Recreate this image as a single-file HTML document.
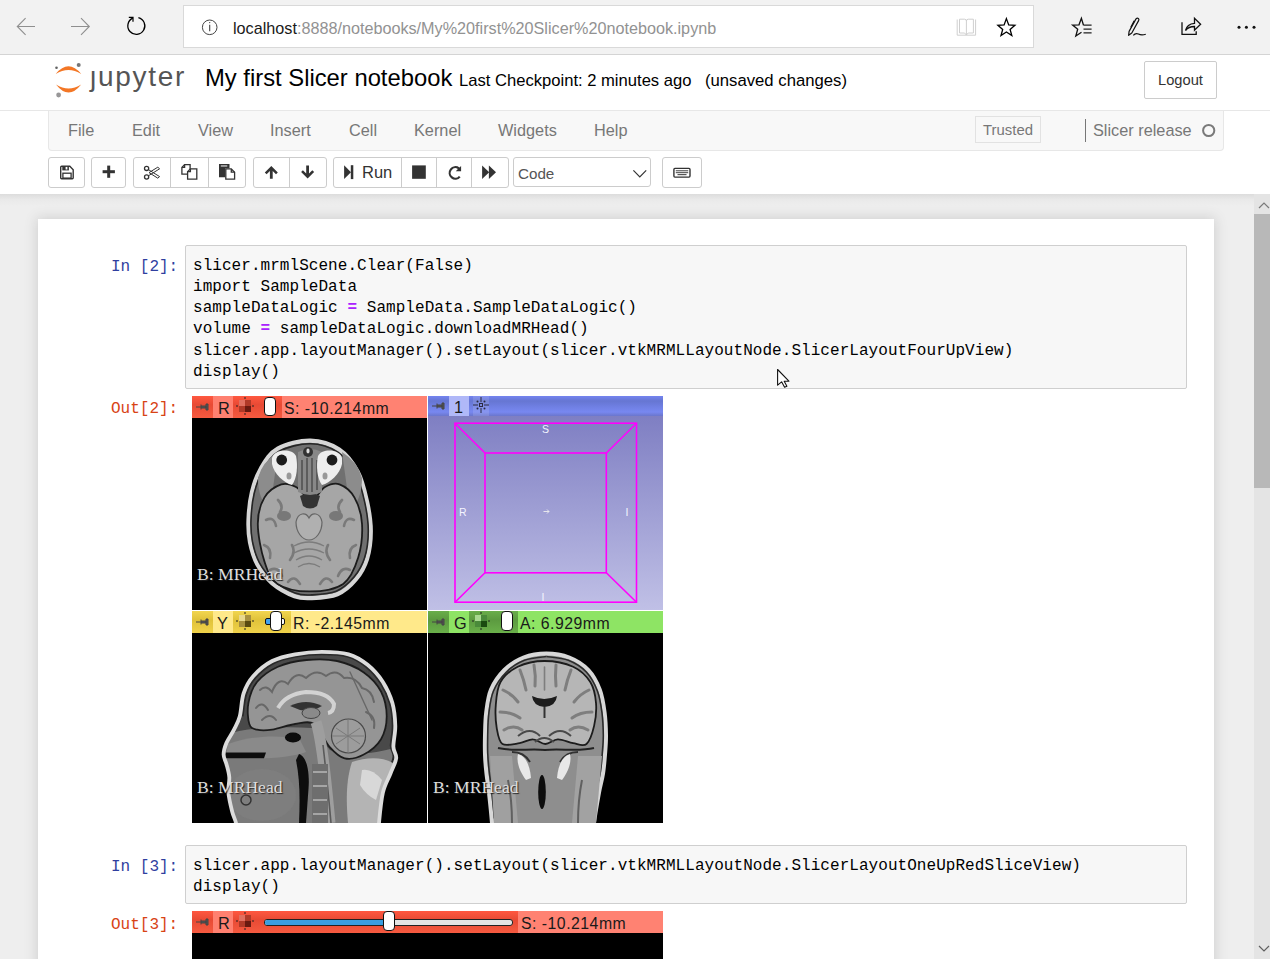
<!DOCTYPE html>
<html><head><meta charset="utf-8">
<style>
*{box-sizing:border-box;margin:0;padding:0}
html,body{width:1270px;height:959px;overflow:hidden;background:#eeeeee;font-family:"Liberation Sans",sans-serif;position:relative}
.abs{position:absolute}
#chrome{position:absolute;left:0;top:0;width:1270px;height:55px;background:#f2f2f2;border-bottom:1px solid #d4d4d4}
#addr{position:absolute;left:183px;top:5px;width:851px;height:43px;background:#fff;border:1px solid #d9d9d9}
#url{position:absolute;left:233px;top:19px;font-size:16.2px;color:#1a1a1a;white-space:nowrap;letter-spacing:0}
#url span{color:#929292}
#hdr{position:absolute;left:0;top:55px;width:1270px;height:139px;background:#fff}
#hdrline{position:absolute;left:0;top:110px;width:1270px;height:1px;background:#e7e7e7}
#title{position:absolute;left:205px;top:64px;font-size:23.8px;color:#000;white-space:nowrap}
#ckpt{position:absolute;left:459px;top:71px;font-size:16.6px;color:#000;white-space:nowrap}
#autosave{position:absolute;left:705px;top:71px;font-size:16.7px;color:#000;white-space:nowrap}
#logout{position:absolute;left:1144px;top:61px;width:73px;height:38px;border:1px solid #ccc;border-radius:2px;background:#fff;font-size:14.7px;color:#333;text-align:center;line-height:36px}
#menubar{position:absolute;left:48px;top:111px;width:1176px;height:40px;background:#f8f8f8;border:1px solid #e7e7e7;border-top:none;border-radius:0 0 4px 4px}
.mi{position:absolute;top:11px;font-size:16.3px;color:#777;white-space:nowrap}
#trusted{position:absolute;left:975px;top:116px;width:66px;height:27px;border:1px solid #e2e2e2;background:#f8f8f8;font-size:14.9px;color:#777;text-align:center;line-height:26.5px}
#kname{position:absolute;left:1093px;top:121px;font-size:16.3px;color:#777;white-space:nowrap}
.btn{position:absolute;top:157px;height:31px;border:1px solid #cccccc;background:#fff;border-radius:3px}
#nbshadow{position:absolute;left:0;top:194px;width:1254px;height:12px;background:linear-gradient(#dcdcdc,#e9e9e9 45%,#eeeeee)}
#container{position:absolute;left:38px;top:219px;width:1176px;height:760px;background:#fff;box-shadow:0 0 12px 1px rgba(87,87,87,.2)}
#sb{position:absolute;left:1254px;top:194px;width:16px;height:765px;background:#e4e4e4}
#thumb{position:absolute;left:1254px;top:214px;width:16px;height:274px;background:#b8b8b8}
.prompt{position:absolute;font-family:"Liberation Mono",monospace;font-size:16px;line-height:21.16px;white-space:pre}
.pin{color:#303f9f}
.pout{color:#d84315}
.inbox{position:absolute;background:#f7f7f7;border:1px solid #cfcfcf;border-radius:2px}
.code{position:absolute;font-family:"Liberation Mono",monospace;font-size:16px;line-height:21.16px;color:#000;white-space:pre;letter-spacing:0.05px}
.op{color:#aa22ff;font-weight:bold}

.bar{position:absolute;height:22px;overflow:hidden}
.seg{position:absolute;top:0;height:100%}
.blab{position:absolute;font-size:15.8px;letter-spacing:0.5px;color:#1a1a1a;white-space:nowrap;line-height:22px;margin-top:2px}
.blet{position:absolute;font-size:16.3px;color:#1a1a1a;line-height:22px;margin-top:0.5px}
.mrlab{position:absolute;font-family:"Liberation Serif",serif;font-size:17.6px;color:#dedede;white-space:nowrap;text-shadow:1px 1px 1px #222}
.view{position:absolute;background:#000;overflow:hidden}
</style></head>
<body>
<div id="chrome"></div>
<div id="addr"></div>

<svg class="abs" style="left:0;top:0" width="1270" height="54" viewBox="0 0 1270 54">
 <g fill="none" stroke="#8f8f8f" stroke-width="1.1">
  <path d="M35 26.5H16.8M25.6 18.2L17.3 26.5L25.6 34.8"/>
  <path d="M71 26.5H89.3M81 18.2L89.3 26.5L81 34.8"/>
 </g>
 <g fill="none" stroke="#000" stroke-width="1.3">
  <path d="M138.4 17.6A8.5 8.5 0 1 1 132.8 18.1"/>
 </g>
 <path d="M128.8 16.8H133.6V21.7L132.4 21.7L132.4 18H128.8Z" fill="#000"/>
 <circle cx="209.7" cy="27.3" r="7.3" fill="none" stroke="#444" stroke-width="1"/>
 <path d="M209.7 24.8V31.2" stroke="#444" stroke-width="1.1"/>
 <circle cx="209.7" cy="22.6" r="0.7" fill="#444"/>
 <g fill="none" stroke="#cfcfcf" stroke-width="1">
  <path d="M957.2 19.5V35.2H975.6V19.5"/>
  <path d="M959.5 19.2H964.5Q966.4 19.2 966.4 21V35"/>
  <path d="M973.4 19.2H968.3Q966.4 19.2 966.4 21"/>
  <path d="M959.5 19.2V33H964.6L966.4 35L968.2 33H973.4V19.2"/>
 </g>
 <path d="M1006.4 18.6L1008.7 24.9L1014.9 25.3L1010.1 29.4L1011.8 35.6L1006.4 32.0L1001.0 35.6L1002.7 29.4L997.9 25.3L1004.1 24.9Z" fill="none" stroke="#000" stroke-width="1.3" stroke-linejoin="miter"/>
 <path d="M1083.5 25.2L1081.4 18.2L1079 24.8L1072.6 25.1L1077.7 29.2L1075.8 36L1081.5 32.3" fill="none" stroke="#111" stroke-width="1.3"/>
 <path d="M1083.5 25.2H1091.6M1083.5 29.1H1091.6M1083.5 32.9H1091.6" stroke="#222" stroke-width="1.3"/>
 <g fill="none" stroke="#111" stroke-width="1.2" stroke-linejoin="round">
  <path d="M1128.6 35.3L1129.1 31.4L1136 18.9Q1137.3 17.6 1138.5 18.6Q1139.3 19.6 1138.6 20.6L1131.8 33Z"/>
  <path d="M1134.2 20.8L1130.8 27.2"/>
  <path d="M1133.3 35.3Q1135.5 32.6 1138.4 34Q1141.5 35.7 1145.8 34.2"/>
 </g>
 <g fill="none" stroke="#111" stroke-width="1.3">
  <path d="M1182 22.2V34.3H1196.2V31.2"/>
  <path d="M1185.5 30.5Q1187 23.8 1194.5 23.3V18.2L1200.6 24.2L1194.5 30.2V26.5Q1188.5 26.5 1185.5 30.5Z" stroke-linejoin="miter"/>
 </g>
 <circle cx="1239" cy="27.2" r="1.5" fill="#111"/>
 <circle cx="1246.4" cy="27.2" r="1.5" fill="#111"/>
 <circle cx="1254" cy="27.2" r="1.5" fill="#111"/>
</svg>
<div id="url">localhost<span>:8888/notebooks/My%20first%20Slicer%20notebook.ipynb</span></div>

<div id="hdr"></div>
<div id="hdrline"></div>

<svg class="abs" style="left:50px;top:60px" width="40" height="42" viewBox="0 0 40 42">
 <path d="M5.7 13.9Q18.5 -1.4 31.2 13.9Q18.5 6.3 5.7 13.9Z" fill="#f37726"/>
 <path d="M6 24.6Q18.5 40.6 31.2 24.6Q18.5 32.6 6 24.6Z" fill="#f37726"/>
 <circle cx="28.7" cy="5" r="2" fill="#767677"/>
 <circle cx="6.5" cy="7.8" r="1.3" fill="#616262"/>
 <circle cx="8.6" cy="35" r="2.4" fill="#989798"/>
</svg>
<div class="abs" style="left:90px;top:61px;font-size:28px;color:#555;letter-spacing:1.7px;white-space:nowrap">&#x237;upyter</div>
<div id="title">My first Slicer notebook</div>
<div id="ckpt">Last Checkpoint: 2 minutes ago</div><div id="autosave">(unsaved changes)</div>
<div id="logout">Logout</div>

<div id="menubar"></div>
<div class="mi" style="left:68px;top:121px">File</div>
<div class="mi" style="left:132px;top:121px">Edit</div>
<div class="mi" style="left:198px;top:121px">View</div>
<div class="mi" style="left:270px;top:121px">Insert</div>
<div class="mi" style="left:349px;top:121px">Cell</div>
<div class="mi" style="left:414px;top:121px">Kernel</div>
<div class="mi" style="left:498px;top:121px">Widgets</div>
<div class="mi" style="left:594px;top:121px">Help</div>
<div id="trusted">Trusted</div>
<div class="abs" style="left:1085px;top:119px;width:1px;height:23px;background:#777"></div>
<div id="kname">Slicer release</div>


<div class="btn" style="left:48px;width:37px"></div>
<div class="btn" style="left:91px;width:35px"></div>
<div class="btn" style="left:133px;width:113px"></div>
<div class="abs" style="left:170px;top:157px;width:1px;height:31px;background:#ccc"></div>
<div class="abs" style="left:208px;top:157px;width:1px;height:31px;background:#ccc"></div>
<div class="btn" style="left:253px;width:74px"></div>
<div class="abs" style="left:289px;top:157px;width:1px;height:31px;background:#ccc"></div>
<div class="btn" style="left:333px;width:176px"></div>
<div class="abs" style="left:401px;top:157px;width:1px;height:31px;background:#ccc"></div>
<div class="abs" style="left:436px;top:157px;width:1px;height:31px;background:#ccc"></div>
<div class="abs" style="left:471px;top:157px;width:1px;height:31px;background:#ccc"></div>
<div class="btn" style="left:513px;width:138px;height:30px"></div>
<div class="btn" style="left:662px;width:40px"></div>
<div class="abs" style="left:362px;top:163px;font-size:16.5px;color:#333;white-space:nowrap">Run</div>
<div class="abs" style="left:518px;top:165px;font-size:15.2px;color:#555;white-space:nowrap">Code</div>
<svg class="abs" style="left:0;top:150px" width="720" height="44" viewBox="0 150 720 44">
 <g fill="#333" stroke="none">
  <path d="M60.7 167.2Q60.7 166.3 61.6 166.3H69.8L73.2 169.7V177.8Q73.2 178.7 72.3 178.7H61.6Q60.7 178.7 60.7 177.8Z" fill="none" stroke="#333" stroke-width="1.4"/>
  <rect x="62.3" y="166" width="6.6" height="4.4"/>
  <rect x="65.6" y="166.9" width="1.8" height="2.6" fill="#fff"/>
  <rect x="62.9" y="173.2" width="8.2" height="4.9" fill="none" stroke="#333" stroke-width="1.3"/>
  <rect x="102.6" y="170.2" width="12.3" height="3"/>
  <rect x="107.2" y="165.6" width="3" height="12.2"/>
  <path d="M264.8 172.4L271.3 165.9L277.8 172.4L276 174.2L272.7 170.9V178.8H269.9V170.9L266.6 174.2Z"/>
  <path d="M301.1 172L307.6 178.5L314.1 172L312.3 170.2L309 173.5V165.6H306.2V173.5L302.9 170.2Z"/>
  <path d="M344.1 165.2L351 172.2L344.1 179.1Z"/>
  <rect x="350.8" y="165.2" width="2.5" height="13.9"/>
  <rect x="412.1" y="165.4" width="13.7" height="13.4"/>
  <path d="M482.1 165.4L489.2 172.2L482.1 179Z"/>
  <path d="M488.9 165.4L496 172.2L488.9 179Z"/>
  <path d="M461.1 165.9V171.2H455.8L457.9 169.1A4.6 4.6 0 1 0 458.9 175.9L460.6 177.3A6.8 6.8 0 1 1 459.5 167.5Z"/>
 </g>
 <g fill="none" stroke="#333" stroke-width="1.3">
  <circle cx="146.6" cy="168.4" r="2.1"/>
  <circle cx="146.6" cy="177" r="2.1"/>
  <path d="M148.4 169.6L159.6 176.6L157.8 178.2L149 172.6M148.4 175.8L159.6 168.8L157.8 167.2L149 172.6" stroke-width="1"/>
  <path d="M181.9 167.4L184.6 164.6H190.1V174.1H181.9Z"/>
  <path d="M181.9 167.4H184.6V164.6"/>
  <path d="M187.6 171.6L190.4 168.8H196.8V179.1H187.6Z" fill="#fff"/>
  <path d="M187.6 171.6H190.4V168.8"/>
  <path d="M225.8 168.9H231.3L234.6 172.2V179.1H225.8Z" fill="#fff"/>
  <path d="M231.3 168.9V172.2H234.6"/>
  <path d="M633.4 170.4L639.8 176.8L646.2 170.4" stroke-width="1.2"/>
  <rect x="673.9" y="168.4" width="16.1" height="8.7" rx="1" stroke-width="1.4"/>
 </g>
 <path d="M219 164H229.5V168.2H225.2V177.2H219Z" fill="#333"/>
 <rect x="220.8" y="165.1" width="6.5" height="1.7" fill="#aaa"/>
 <g fill="#555">
  <rect x="675.8" y="170.2" width="12.4" height="1.1"/>
  <rect x="675.8" y="172.1" width="12.4" height="1.1"/>
  <rect x="677.5" y="174" width="9" height="1.2"/>
 </g>
</svg>
<div id="nbshadow"></div>
<div id="container"></div>
<div id="sb"></div>
<div id="thumb"></div>

<div class="prompt pin" style="left:111px;top:257px">In [2]:</div>
<div class="inbox" style="left:185px;top:245px;width:1002px;height:144px"></div>
<div class="code" style="left:193px;top:256px">slicer.mrmlScene.Clear(False)
import SampleData
sampleDataLogic <span class="op">=</span> SampleData.SampleDataLogic()
volume <span class="op">=</span> sampleDataLogic.downloadMRHead()
slicer.app.layoutManager().setLayout(slicer.vtkMRMLLayoutNode.SlicerLayoutFourUpView)
display()</div>
<div class="prompt pout" style="left:111px;top:399px">Out[2]:</div>

<div class="prompt pin" style="left:111px;top:857px">In [3]:</div>
<div class="inbox" style="left:185px;top:845px;width:1002px;height:59px"></div>
<div class="code" style="left:193px;top:856px">slicer.app.layoutManager().setLayout(slicer.vtkMRMLLayoutNode.SlicerLayoutOneUpRedSliceView)
display()</div>
<div class="prompt pout" style="left:111px;top:915px">Out[3]:</div>


<!-- RED -->
<div class="view" style="left:192px;top:396px;width:235px;height:214px"></div>
<div class="bar" style="left:192px;top:396px;width:235px;background:#ff8272">
 <div class="seg" style="left:0;width:21px;background:linear-gradient(#ff5840,#e84a34 40%,#f55a40)"></div>
 <div class="seg" style="left:21px;width:20px;background:#ff8070"></div>
 <div class="seg" style="left:41px;width:49px;background:linear-gradient(#ff5840,#e84a34 40%,#f55a40)"></div>
</div>
<svg class="abs" style="left:196px;top:403px" width="14" height="8" viewBox="0 0 14 8"><path d="M0 4H5M5 1.5V6.5M5 3H10V5H5M10 1V7H12V1Z" stroke="#444" stroke-width="1" fill="#555"/></svg>
<div class="blet" style="left:218px;top:396px">R</div>
<svg class="abs" style="left:236px;top:397px" width="18" height="18" viewBox="0 0 18 18"><rect x="3" y="3" width="12" height="12" fill="#b03a28"/><rect x="3" y="3" width="6" height="6" fill="#e07060"/><rect x="9" y="9" width="6" height="6" fill="#6a1a10"/><path d="M9 0V2M9 16V18M0 9H2M16 9H18" stroke="#222" stroke-width="1"/></svg>
<div class="abs" style="left:264px;top:397px;width:12px;height:19px;background:#fff;border:1.5px solid #111;border-radius:4px"></div>
<div class="blab" style="left:284px;top:396px">S: -10.214mm</div>


<svg class="abs" style="left:192px;top:418px" width="235" height="192" viewBox="192 418 235 192">
 <defs>
  <filter id="soft" x="-5%" y="-5%" width="110%" height="110%"><feGaussianBlur stdDeviation="0.6"/></filter>
 </defs>
 <g filter="url(#soft)">
 <path d="M310.4 440.6C300.2 440.4 286.0 443.9 277.8 448.5C269.6 453.1 265.4 460.7 261.1 468.0C256.8 475.3 254.0 483.5 251.9 492.2C249.8 500.8 248.8 511.6 248.5 520.0C248.2 528.4 248.5 534.9 250.0 542.4C251.5 549.8 253.7 557.8 257.4 564.6C261.1 571.5 266.1 578.0 272.3 583.3C278.5 588.5 288.1 593.7 294.6 596.2C301.1 598.7 304.2 598.4 311.3 598.1C318.4 597.8 329.9 597.4 337.3 594.3C344.7 591.2 350.9 585.4 355.8 579.5C360.8 573.6 364.5 567.2 367.0 559.1C369.5 551.0 370.8 540.8 370.8 531.2C370.8 521.6 369.2 511.4 367.0 501.5C364.8 491.6 362.4 480.4 357.7 471.8C353.1 463.1 347.1 454.7 339.2 449.5C331.3 444.3 320.6 440.8 310.4 440.6Z" fill="#707070" stroke="#d6d6d6" stroke-width="4.2"/>
 <path d="M310.4 443.8C300.5 443.6 287.0 447.0 279.1 451.4C271.2 455.8 267.2 463.1 263.1 470.1C258.9 477.1 256.2 485.0 254.2 493.3C252.2 501.6 251.3 511.9 251.0 520.0C250.7 528.0 251.0 534.3 252.4 541.4C253.8 548.6 256.0 556.3 259.5 562.8C263.1 569.4 267.9 575.6 273.8 580.7C279.7 585.7 288.9 590.7 295.2 593.1C301.4 595.5 304.4 595.2 311.2 594.9C318.1 594.6 329.1 594.3 336.2 591.3C343.3 588.3 349.2 582.7 354.0 577.1C358.7 571.4 362.3 565.2 364.7 557.5C367.1 549.8 368.3 539.9 368.3 530.7C368.3 521.5 366.8 511.7 364.7 502.2C362.6 492.7 360.2 482.0 355.8 473.7C351.3 465.4 345.6 457.3 338.0 452.3C330.4 447.3 320.2 443.9 310.4 443.8Z" fill="none" stroke="#262626" stroke-width="1.6"/>
 <path d="M258 478Q262 462 278 452L270 510Q258 500 258 478ZM362 478Q358 462 342 452L350 510Q362 500 362 478Z" fill="#8c8c8c"/>
 <path d="M257.8 523.8C257.8 534.4 261.1 551.4 264.4 561.4C267.7 571.4 270.0 578.9 277.5 583.9C285.0 588.9 298.4 591.4 309.4 591.4C320.3 591.4 335.1 589.5 343.2 583.9C351.3 578.3 355.1 567.6 358.2 557.6C361.3 547.6 362.6 533.8 362.0 523.8C361.4 513.8 358.2 504.2 354.5 497.6C350.8 491.0 344.4 486.2 339.5 484.4C334.6 482.6 329.7 484.4 325.0 487.0C320.3 489.6 316.1 500.0 311.3 500.0C306.5 500.0 301.0 489.6 296.0 487.0C291.0 484.4 286.6 482.6 281.3 484.4C276.0 486.2 268.3 491.0 264.4 497.6C260.5 504.2 257.8 513.2 257.8 523.8Z" fill="#a6a6a6" stroke="#1c1c1c" stroke-width="1.8"/>
 <g stroke="#7a7a7a" stroke-width="2.6" fill="none" stroke-linecap="round">
  <path d="M266 520Q274 516 276 526M264 545Q272 548 270 558M270 570Q278 566 282 576M288 582Q294 574 300 584"/>
  <path d="M354 520Q346 516 344 526M356 545Q348 548 350 558M350 570Q342 566 338 576M332 582Q326 574 320 584"/>
  <path d="M278 500Q284 506 280 512M342 500Q336 506 340 512M290 560Q296 552 292 545M330 560Q324 552 328 545"/>
 </g>
 <ellipse cx="284" cy="516" rx="7" ry="5" fill="#787878"/>
 <ellipse cx="336" cy="516" rx="7" ry="5" fill="#787878"/>
 <path d="M296 522C298 512 306 512 309 518C312 512 320 512 322 522C322 532 316 540 309 540C302 540 296 532 296 522Z" fill="#b0b0b0" stroke="#666" stroke-width="1.2"/>
 <path d="M294 546Q309 538 324 546M294 553Q309 545 324 553M296 560Q309 552 322 560M298 567Q309 560 320 567" stroke="#7c7c7c" stroke-width="1.3" fill="none"/>
 <path d="M300 496Q310 490 320 496L317 506Q310 511 303 506Z" fill="#333"/>
 <path d="M298 452Q310 446 322 452L322 492Q310 498 298 492Z" fill="#888"/>
 <path d="M302 460V490M307 458V492M312 458V492M317 460V490" stroke="#4a4a4a" stroke-width="1.4"/>
 <ellipse cx="308" cy="452" rx="5" ry="5" fill="#333"/>
 <ellipse cx="308" cy="451" rx="1.6" ry="2.4" fill="#ddd"/>
 <g fill="#eeeeee">
  <path d="M272 458C274 449 292 448 296 456C298 466 297 478 292 485C284 483 274 474 272 464Z"/>
  <path d="M342 458C340 449 322 448 318 456C316 466 317 478 322 485C330 483 340 474 342 464Z"/>
 </g>
 <circle cx="281.7" cy="460" r="5.4" fill="#1a1a1a"/>
 <circle cx="332" cy="460" r="5.4" fill="#1a1a1a"/>
 <ellipse cx="289" cy="476" rx="2.5" ry="3.5" fill="#999"/><ellipse cx="325" cy="476" rx="2.5" ry="3.5" fill="#999"/>
 </g>
</svg>
<div class="mrlab" style="left:197px;top:563.5px">B: MRHead</div>

<!-- 3D -->
<div class="view" style="left:428px;top:396px;width:235px;height:214px;background:linear-gradient(#7878bf,#c0c0e6)"></div>
<div class="bar" style="left:428px;top:396px;width:235px;height:20px;background:linear-gradient(#7484f0,#6676d2 25%,#7080e4 55%,#7888f0 80%,#6a76cc)">
 <div class="seg" style="left:21px;width:20px;background:#b0b8f8"></div>
 <div class="seg" style="left:45px;width:16px;background:rgba(255,255,255,.12)"></div>
</div>
<svg class="abs" style="left:432px;top:402px" width="14" height="8" viewBox="0 0 14 8"><path d="M0 4H5M5 1.5V6.5M5 3H10V5H5M10 1V7H12V1Z" stroke="#444" stroke-width="1" fill="#555"/></svg>
<div class="blet" style="left:454px;top:395px">1</div>
<svg class="abs" style="left:472px;top:396px" width="18" height="18" viewBox="0 0 18 18"><g stroke="#2a2a40" stroke-width="1" fill="none"><rect x="7.5" y="7.5" width="3" height="3"/><path d="M9 1V6M9 12V17M1 9H6M12 9H17"/></g><g fill="#2a2a40"><circle cx="5.5" cy="5.5" r="1"/><circle cx="12.5" cy="5.5" r="1"/><circle cx="5.5" cy="12.5" r="1"/><circle cx="12.5" cy="12.5" r="1"/></g></svg>
<svg class="abs" style="left:428px;top:416px" width="235" height="194" viewBox="428 416 235 194">
 <g stroke="#ff00ff" stroke-width="1.6" fill="none">
  <rect x="455" y="423.2" width="181.5" height="179"/>
  <rect x="485" y="453" width="121.3" height="119.8"/>
  <path d="M455 423.2L485 453M636.5 423.2L606.3 453M455 602.2L485 572.8M636.5 602.2L606.3 572.8"/>
 </g>
 <g fill="#f4f4ff" font-family="Liberation Sans" font-size="10.5">
  <text x="542" y="433">S</text><text x="459" y="516">R</text><text x="625.5" y="516">I</text><text x="541.5" y="601">I</text>
 </g>
 <path d="M543.5 511.5H549M547 509.5L549 511.5L547 513.5" stroke="#eee" stroke-width="0.9" fill="none"/>
</svg>

<!-- YELLOW -->
<div class="view" style="left:192px;top:611px;width:235px;height:212px"></div>
<div class="bar" style="left:192px;top:611px;width:235px;background:#ffe98a">
 <div class="seg" style="left:0;width:21px;background:linear-gradient(#f2d650,#e0c23a 40%,#f0d24a)"></div>
 <div class="seg" style="left:21px;width:20px;background:#ffe98a"></div>
 <div class="seg" style="left:41px;width:58px;background:linear-gradient(#f2d650,#e0c23a 40%,#f0d24a)"></div>
</div>
<svg class="abs" style="left:196px;top:618px" width="14" height="8" viewBox="0 0 14 8"><path d="M0 4H5M5 1.5V6.5M5 3H10V5H5M10 1V7H12V1Z" stroke="#444" stroke-width="1" fill="#555"/></svg>
<div class="blet" style="left:217px;top:611px">Y</div>
<svg class="abs" style="left:236px;top:612px" width="18" height="18" viewBox="0 0 18 18"><rect x="3" y="3" width="12" height="12" fill="#a89040"/><rect x="3" y="3" width="6" height="6" fill="#e8d890"/><rect x="9" y="9" width="6" height="6" fill="#5a4a10"/><path d="M9 0V2M9 16V18M0 9H2M16 9H18" stroke="#222" stroke-width="1"/></svg>
<div class="abs" style="left:265px;top:618px;width:7px;height:7px;background:#3ea2f0;border:1px solid #111;border-radius:2px"></div>
<div class="abs" style="left:279px;top:618px;width:6px;height:7px;background:#fff;border:1px solid #111;border-radius:2px"></div>
<div class="abs" style="left:270px;top:611px;width:12px;height:20px;background:#fff;border:1.5px solid #111;border-radius:4px"></div>
<div class="blab" style="left:293px;top:611px">R: -2.145mm</div>


<svg class="abs" style="left:192px;top:633px" width="235" height="190" viewBox="192 633 235 190">
 <g filter="url(#soft)">
 <defs><clipPath id="sagclip"><path d="M239.8 716.3C241.4 710.2 241.4 700.1 243.6 693.4C245.8 686.7 248.4 681.6 253.2 676.2C258.0 670.8 265.2 664.6 272.2 661.0C279.2 657.4 286.8 655.8 295.1 654.3C303.4 652.8 312.9 651.8 321.8 651.8C330.7 651.8 340.9 652.1 348.5 654.3C356.1 656.5 361.9 660.2 367.6 664.8C373.3 669.4 378.8 675.6 382.9 682.0C387.0 688.4 390.3 695.7 392.4 703.0C394.5 710.3 395.1 718.5 395.3 725.8C395.5 733.1 393.2 741.4 393.4 746.8C393.5 752.2 396.7 753.8 396.2 758.3C395.7 762.8 392.7 767.8 390.5 773.5C388.3 779.2 384.8 784.4 382.9 792.6C381.0 800.9 379.6 816.8 379.0 823.0C378.4 829.2 402.8 828.8 379.0 830.0C355.2 831.2 259.8 831.2 236.0 830.0C212.2 828.8 236.6 826.0 236.0 823.0C235.4 820.0 233.5 816.8 232.2 811.7C230.9 806.6 228.9 798.3 228.4 792.6C227.9 786.9 229.6 782.2 229.3 777.4C229.0 772.6 227.4 767.8 226.4 764.0C225.4 760.2 223.6 758.0 223.6 754.5C223.6 751.0 224.7 747.1 226.4 743.0C228.1 738.9 231.8 734.2 234.0 729.7C236.2 725.2 238.2 722.3 239.8 716.3Z"/></clipPath></defs>
 <path d="M239.8 716.3C241.4 710.2 241.4 700.1 243.6 693.4C245.8 686.7 248.4 681.6 253.2 676.2C258.0 670.8 265.2 664.6 272.2 661.0C279.2 657.4 286.8 655.8 295.1 654.3C303.4 652.8 312.9 651.8 321.8 651.8C330.7 651.8 340.9 652.1 348.5 654.3C356.1 656.5 361.9 660.2 367.6 664.8C373.3 669.4 378.8 675.6 382.9 682.0C387.0 688.4 390.3 695.7 392.4 703.0C394.5 710.3 395.1 718.5 395.3 725.8C395.5 733.1 393.2 741.4 393.4 746.8C393.5 752.2 396.7 753.8 396.2 758.3C395.7 762.8 392.7 767.8 390.5 773.5C388.3 779.2 384.8 784.4 382.9 792.6C381.0 800.9 379.6 816.8 379.0 823.0C378.4 829.2 402.8 828.8 379.0 830.0C355.2 831.2 259.8 831.2 236.0 830.0C212.2 828.8 236.6 826.0 236.0 823.0C235.4 820.0 233.5 816.8 232.2 811.7C230.9 806.6 228.9 798.3 228.4 792.6C227.9 786.9 229.6 782.2 229.3 777.4C229.0 772.6 227.4 767.8 226.4 764.0C225.4 760.2 223.6 758.0 223.6 754.5C223.6 751.0 224.7 747.1 226.4 743.0C228.1 738.9 231.8 734.2 234.0 729.7C236.2 725.2 238.2 722.3 239.8 716.3Z" fill="#484848"/>
 <g clip-path="url(#sagclip)">
 <path d="M226 735C240 728 280 726 312 728L330 750C350 758 380 752 394 748L392 823H226Z" fill="#7a7a7a"/>
 <path d="M242.6 716.4C243.2 712.7 244.1 700.8 246.3 694.3C248.4 687.9 250.9 682.9 255.5 677.7C260.1 672.5 267.1 666.6 273.9 663.1C280.6 659.5 288.0 658.1 296.0 656.6C303.9 655.1 313.1 654.2 321.7 654.2C330.3 654.2 340.1 654.5 347.5 656.6C354.9 658.7 360.4 662.3 365.9 666.7C371.5 671.2 376.7 677.2 380.7 683.3C384.7 689.5 387.9 696.6 389.9 703.6C391.9 710.6 392.5 718.6 392.7 725.6C392.8 732.6 390.7 740.6 390.8 745.9C391.0 751.1 394.0 752.7 393.5 757.0C393.1 761.3 390.2 766.1 388.0 771.6C385.9 777.1 381.9 787.0 380.7 790.1" fill="none" stroke="#2a2a2a" stroke-width="2"/>
 <path d="M249.3 724.0C247.9 719.5 247.1 710.0 248.4 703.0C249.7 696.0 252.1 688.0 257.0 682.0C261.9 676.0 269.7 670.4 278.0 666.7C286.3 663.0 296.8 661.0 306.6 660.0C316.5 659.0 327.6 658.9 337.1 661.0C346.6 663.1 356.5 667.3 363.8 672.4C371.1 677.5 377.2 684.2 381.0 691.5C384.8 698.8 386.7 708.3 386.7 716.3C386.7 724.2 384.8 732.8 381.0 739.2C377.2 745.6 369.9 751.3 363.8 754.5C357.8 757.7 350.4 759.6 344.7 758.3C339.0 757.0 334.6 752.5 329.5 746.8C324.4 741.1 319.9 727.8 314.2 724.0C308.5 720.2 302.1 723.0 295.1 724.0C288.1 725.0 278.6 728.8 272.2 729.7C265.8 730.7 260.8 730.7 257.0 729.7C253.2 728.8 250.7 728.5 249.3 724.0Z" fill="#959595" stroke="#1e1e1e" stroke-width="1.8"/>
 <g stroke="#686868" stroke-width="2" fill="none" stroke-linecap="round">
  <path d="M260 690Q266 684 272 692Q278 676 288 684Q296 670 306 678Q316 668 326 676Q336 668 344 678Q356 676 362 688Q372 690 374 702"/>
  <path d="M256 708Q262 700 268 710M262 720Q270 712 276 720M366 712Q376 716 374 728"/>
  <path d="M350 672L372 720" stroke-width="1.4"/>
 </g>
 <path d="M278 708Q286 694 306 692Q328 692 334 704Q334 712 328 713" stroke="#d2d2d2" stroke-width="4" fill="none"/>
 <path d="M290 706Q306 698 322 706Q312 712 300 710Z" fill="#333"/>
 <ellipse cx="311" cy="713" rx="9" ry="5.5" fill="#8a8a8a" stroke="#444" stroke-width="1"/>
 <ellipse cx="348.5" cy="736" rx="17" ry="17" fill="#9c9c9c" stroke="#4a4a4a" stroke-width="1.2"/>
 <path d="M348 720L348 752M336 728L360 744M336 744L360 728M332 736H364" stroke="#7a7a7a" stroke-width="1"/>
 <path d="M316 722C322 740 326 780 330 823" stroke="#9e9e9e" stroke-width="11" fill="none"/>
 <path d="M323 745C327 780 329 800 331 823" stroke="#5a5a5a" stroke-width="1.6" fill="none"/>
 <path d="M228 744C250 736 280 734 300 740L306 752C290 758 260 760 226 757Z" fill="#8a8a8a"/>
 <ellipse cx="293" cy="737.5" rx="8" ry="5" fill="#080808"/>
 <path d="M224.5 752.5H266L264 758.3H225Z" fill="#101010"/>
 <path d="M299 754C306 756 310 770 308.5 789L306 823H299C300 800 300 780 296 760Z" fill="#0e0e0e"/>
 <ellipse cx="262" cy="795" rx="34" ry="26" fill="#7e7e7e"/>
 <circle cx="246" cy="800" r="5" fill="none" stroke="#333" stroke-width="1.5"/>
 <path d="M352 762C365 758 380 756 393 763L381 823H348C346 800 346 780 352 762Z" fill="#b4b4b4"/>
 <path d="M362 770Q372 768 382 780L376 800Q366 795 360 785Z" fill="#d8d8d8"/>
 <path d="M312 764H328V823H312Z" fill="#6e6e6e"/>
 <path d="M313 772H327M313 786H327M313 800H327M313 814H327" stroke="#b8b8b8" stroke-width="1.5"/>
 </g>
 <path d="M239.8 716.3C241.4 710.2 241.4 700.1 243.6 693.4C245.8 686.7 248.4 681.6 253.2 676.2C258.0 670.8 265.2 664.6 272.2 661.0C279.2 657.4 286.8 655.8 295.1 654.3C303.4 652.8 312.9 651.8 321.8 651.8C330.7 651.8 340.9 652.1 348.5 654.3C356.1 656.5 361.9 660.2 367.6 664.8C373.3 669.4 378.8 675.6 382.9 682.0C387.0 688.4 390.3 695.7 392.4 703.0C394.5 710.3 395.1 718.5 395.3 725.8C395.5 733.1 393.2 741.4 393.4 746.8C393.5 752.2 396.7 753.8 396.2 758.3C395.7 762.8 392.7 767.8 390.5 773.5C388.3 779.2 384.8 784.4 382.9 792.6C381.0 800.9 379.6 816.8 379.0 823.0C378.4 829.2 402.8 828.8 379.0 830.0C355.2 831.2 259.8 831.2 236.0 830.0C212.2 828.8 236.6 826.0 236.0 823.0C235.4 820.0 233.5 816.8 232.2 811.7C230.9 806.6 228.9 798.3 228.4 792.6C227.9 786.9 229.6 782.2 229.3 777.4C229.0 772.6 227.4 767.8 226.4 764.0C225.4 760.2 223.6 758.0 223.6 754.5C223.6 751.0 224.7 747.1 226.4 743.0C228.1 738.9 231.8 734.2 234.0 729.7C236.2 725.2 238.2 722.3 239.8 716.3Z" fill="none" stroke="#dcdcdc" stroke-width="3.8"/>
 </g>
</svg>
<div class="mrlab" style="left:197px;top:777px">B: MRHead</div>

<!-- GREEN -->
<div class="view" style="left:428px;top:611px;width:235px;height:212px"></div>
<div class="bar" style="left:428px;top:611px;width:235px;background:#8ee464">
 <div class="seg" style="left:0;width:21px;background:linear-gradient(#6aae4a,#5c9a40 40%,#6ab04a)"></div>
 <div class="seg" style="left:21px;width:20px;background:#8ee464"></div>
 <div class="seg" style="left:41px;width:49px;background:linear-gradient(#6aae4a,#5c9a40 40%,#6ab04a)"></div>
</div>
<svg class="abs" style="left:432px;top:618px" width="14" height="8" viewBox="0 0 14 8"><path d="M0 4H5M5 1.5V6.5M5 3H10V5H5M10 1V7H12V1Z" stroke="#444" stroke-width="1" fill="#555"/></svg>
<div class="blet" style="left:454px;top:611px">G</div>
<svg class="abs" style="left:472px;top:612px" width="18" height="18" viewBox="0 0 18 18"><rect x="3" y="3" width="12" height="12" fill="#4a8a3a"/><rect x="3" y="3" width="6" height="6" fill="#a8d890"/><rect x="9" y="9" width="6" height="6" fill="#1a4a10"/><path d="M9 0V2M9 16V18M0 9H2M16 9H18" stroke="#222" stroke-width="1"/></svg>
<div class="abs" style="left:501px;top:611px;width:12px;height:20px;background:#fff;border:1.5px solid #111;border-radius:4px"></div>
<div class="blab" style="left:520px;top:611px">A: 6.929mm</div>


<svg class="abs" style="left:428px;top:633px" width="235" height="190" viewBox="428 633 235 190">
 <g filter="url(#soft)">
 <path d="M546.4 653.5C554.0 653.5 562.3 654.8 569.3 657.5C576.3 660.2 583.3 664.6 588.4 670.0C593.5 675.4 597.1 682.5 599.8 689.6C602.5 696.7 603.6 705.0 604.6 712.6C605.6 720.2 605.9 728.5 606.0 735.5C606.1 742.5 605.5 748.2 605.0 754.6C604.5 761.0 604.0 767.4 603.0 773.7C602.0 780.1 600.5 784.5 599.0 792.7C597.5 800.9 594.8 816.8 594.0 823.0C593.2 829.2 611.0 828.8 594.0 830.0C577.0 831.2 509.0 831.2 492.0 830.0C475.0 828.8 492.5 829.2 492.0 823.0C491.5 816.8 489.9 800.9 489.0 792.7C488.1 784.5 487.2 780.1 486.5 773.7C485.8 767.4 485.2 761.0 485.0 754.6C484.8 748.2 484.8 742.5 485.0 735.5C485.2 728.5 485.2 720.2 486.2 712.6C487.2 705.0 488.0 696.7 491.0 689.6C494.0 682.5 499.0 675.4 504.4 670.0C509.8 664.6 516.5 660.2 523.5 657.5C530.5 654.8 538.8 653.5 546.4 653.5Z" fill="#8e8e8e" stroke="#d8d8d8" stroke-width="4"/>
 <path d="M546.4 656.5C550.0 657.1 561.6 657.7 568.3 660.3C574.9 662.9 581.6 667.1 586.5 672.2C591.3 677.4 594.8 684.2 597.4 691.0C600.0 697.7 601.0 705.6 602.0 712.9C602.9 720.2 603.2 728.1 603.3 734.8C603.4 741.5 602.8 747.0 602.3 753.0C601.9 759.1 601.4 765.2 600.4 771.3C599.5 777.3 598.0 781.6 596.6 789.4C595.2 797.3 592.6 813.5 591.8 818.4" fill="none" stroke="#2c2c2c" stroke-width="1.6"/>
 <path d="M494.4 818.4C494.0 813.5 492.4 797.3 491.6 789.4C490.7 781.6 489.8 777.3 489.2 771.3C488.5 765.2 488.0 759.1 487.7 753.0C487.5 747.0 487.6 741.5 487.7 734.8C487.9 728.1 487.9 720.2 488.9 712.9C489.8 705.6 490.6 697.7 493.5 691.0C496.4 684.2 501.1 677.4 506.3 672.2C511.4 667.1 517.8 662.9 524.5 660.3C531.2 657.7 542.7 657.1 546.4 656.5" fill="none" stroke="#2c2c2c" stroke-width="1.6"/>
 <path d="M544.5 661.0C553.7 661.0 565.5 663.2 573.1 666.7C580.7 670.2 586.5 676.0 590.3 682.0C594.1 688.0 595.4 695.7 596.0 703.0C596.6 710.3 595.7 719.1 594.1 725.9C592.5 732.7 590.0 741.1 586.5 744.0C583.0 746.9 577.9 743.9 573.1 743.1C568.3 742.3 562.4 739.1 557.8 739.3C553.2 739.4 549.5 744.0 545.4 744.0C541.3 744.0 537.3 739.4 533.0 739.3C528.7 739.1 524.7 742.3 519.6 743.1C514.5 743.9 506.3 746.5 502.5 744.0C498.7 741.5 497.8 734.3 496.7 727.8C495.6 721.3 495.2 712.5 495.8 704.9C496.4 697.3 496.9 688.4 500.5 682.0C504.1 675.6 510.4 670.2 517.7 666.7C525.0 663.2 535.3 661.0 544.5 661.0Z" fill="#b6b6b6" stroke="#1c1c1c" stroke-width="1.8"/>
 <g stroke="#7e7e7e" stroke-width="3" fill="none" stroke-linecap="round">
  <path d="M503 690Q512 694 518 702M500 712Q512 712 520 718M504 730Q514 724 522 730"/>
  <path d="M589 690Q580 694 574 702M592 712Q580 712 572 718M588 730Q578 724 570 730"/>
  <path d="M520 670Q524 680 526 690M534 665Q536 676 535 686M556 665Q555 676 556 686M571 670Q567 680 565 690"/>
  <path d="M544.5 667V690" stroke-width="1.6"/>
 </g>
 <path d="M532 696Q544 702 557 696Q556 706 544.5 707Q533 706 532 696Z" fill="#1a1a1a"/>
 <path d="M544.5 707V718" stroke="#333" stroke-width="2"/>
 <path d="M518 736Q530 726 540 736M549 736Q560 726 571 736M535 742Q544 734 554 742" stroke="#4a4a4a" stroke-width="2" fill="none"/>
 <path d="M498 748C515 752 530 748 545 750C560 748 578 752 594 748" stroke="#242424" stroke-width="2" fill="none"/>
 <path d="M490 756H512L518 823H494Z" fill="#a0a0a0"/>
 <path d="M578 756H602L596 823H572Z" fill="#a2a2a2"/>
 <path d="M512 752Q524 752 530 762" stroke="#333" stroke-width="2" fill="none"/>
 <path d="M578 752Q566 752 560 762" stroke="#333" stroke-width="2" fill="none"/>
 <path d="M518 754C526 756 530 766 531 778L526 780C520 772 516 762 518 754Z" fill="#e8e8e8"/>
 <path d="M570 754C562 756 558 766 557 778L562 780C568 772 572 762 570 754Z" fill="#e8e8e8"/>
 <ellipse cx="542" cy="792" rx="3.8" ry="17" fill="#0a0a0a"/>
 <path d="M508 780Q512 800 512 823M582 780Q578 800 578 823" stroke="#606060" stroke-width="2" fill="none"/>
 </g>
</svg>
<div class="mrlab" style="left:433px;top:777px">B: MRHead</div>

<!-- OUT3 -->
<div class="view" style="left:192px;top:911px;width:471px;height:48px"></div>
<div class="bar" style="left:192px;top:911px;width:471px;background:#ff8272">
 <div class="seg" style="left:0;width:21px;background:linear-gradient(#ff5840,#e84a34 40%,#f55a40)"></div>
 <div class="seg" style="left:21px;width:20px;background:#ff8070"></div>
 <div class="seg" style="left:41px;width:285px;background:linear-gradient(#ff5840,#e84a34 40%,#f55a40)"></div>
</div>
<svg class="abs" style="left:196px;top:918px" width="14" height="8" viewBox="0 0 14 8"><path d="M0 4H5M5 1.5V6.5M5 3H10V5H5M10 1V7H12V1Z" stroke="#444" stroke-width="1" fill="#555"/></svg>
<div class="blet" style="left:218px;top:911px">R</div>
<svg class="abs" style="left:236px;top:912px" width="18" height="18" viewBox="0 0 18 18"><rect x="3" y="3" width="12" height="12" fill="#b03a28"/><rect x="3" y="3" width="6" height="6" fill="#e07060"/><rect x="9" y="9" width="6" height="6" fill="#6a1a10"/><path d="M9 0V2M9 16V18M0 9H2M16 9H18" stroke="#222" stroke-width="1"/></svg>
<div class="abs" style="left:264px;top:919px;width:249px;height:7px;background:#e4e4e4;border:1px solid #222;border-radius:3px"></div>
<div class="abs" style="left:265px;top:920px;width:120px;height:5px;background:#3a9ee0;border-radius:2px 0 0 2px"></div>
<div class="abs" style="left:383px;top:911px;width:12px;height:20px;background:#fff;border:1.5px solid #111;border-radius:4px"></div>
<div class="blab" style="left:521px;top:911px">S: -10.214mm</div>

<svg class="abs" style="left:1196px;top:118px" width="26" height="26" viewBox="1196 118 26 26"><circle cx="1208.7" cy="130.5" r="5.6" fill="none" stroke="#7a7a7a" stroke-width="2"/></svg>
<svg class="abs" style="left:1254px;top:194px" width="16" height="765" viewBox="1254 194 16 765">
 <path d="M1259 208L1264 203L1269 208" fill="none" stroke="#7a7a7a" stroke-width="1.2"/>
 <path d="M1259 946L1264 951L1269 946" fill="none" stroke="#606060" stroke-width="1.2"/>
</svg>
<svg class="abs" style="left:770px;top:364px" width="26" height="28" viewBox="770 364 26 28">
 <path d="M777.6 369.5V385.2L781.6 381.8L784.6 387.3L786.9 386.3L784.2 381.2H788.9Z" fill="#fff" stroke="#111" stroke-width="1.1" stroke-linejoin="round"/>
</svg>
</body></html>
